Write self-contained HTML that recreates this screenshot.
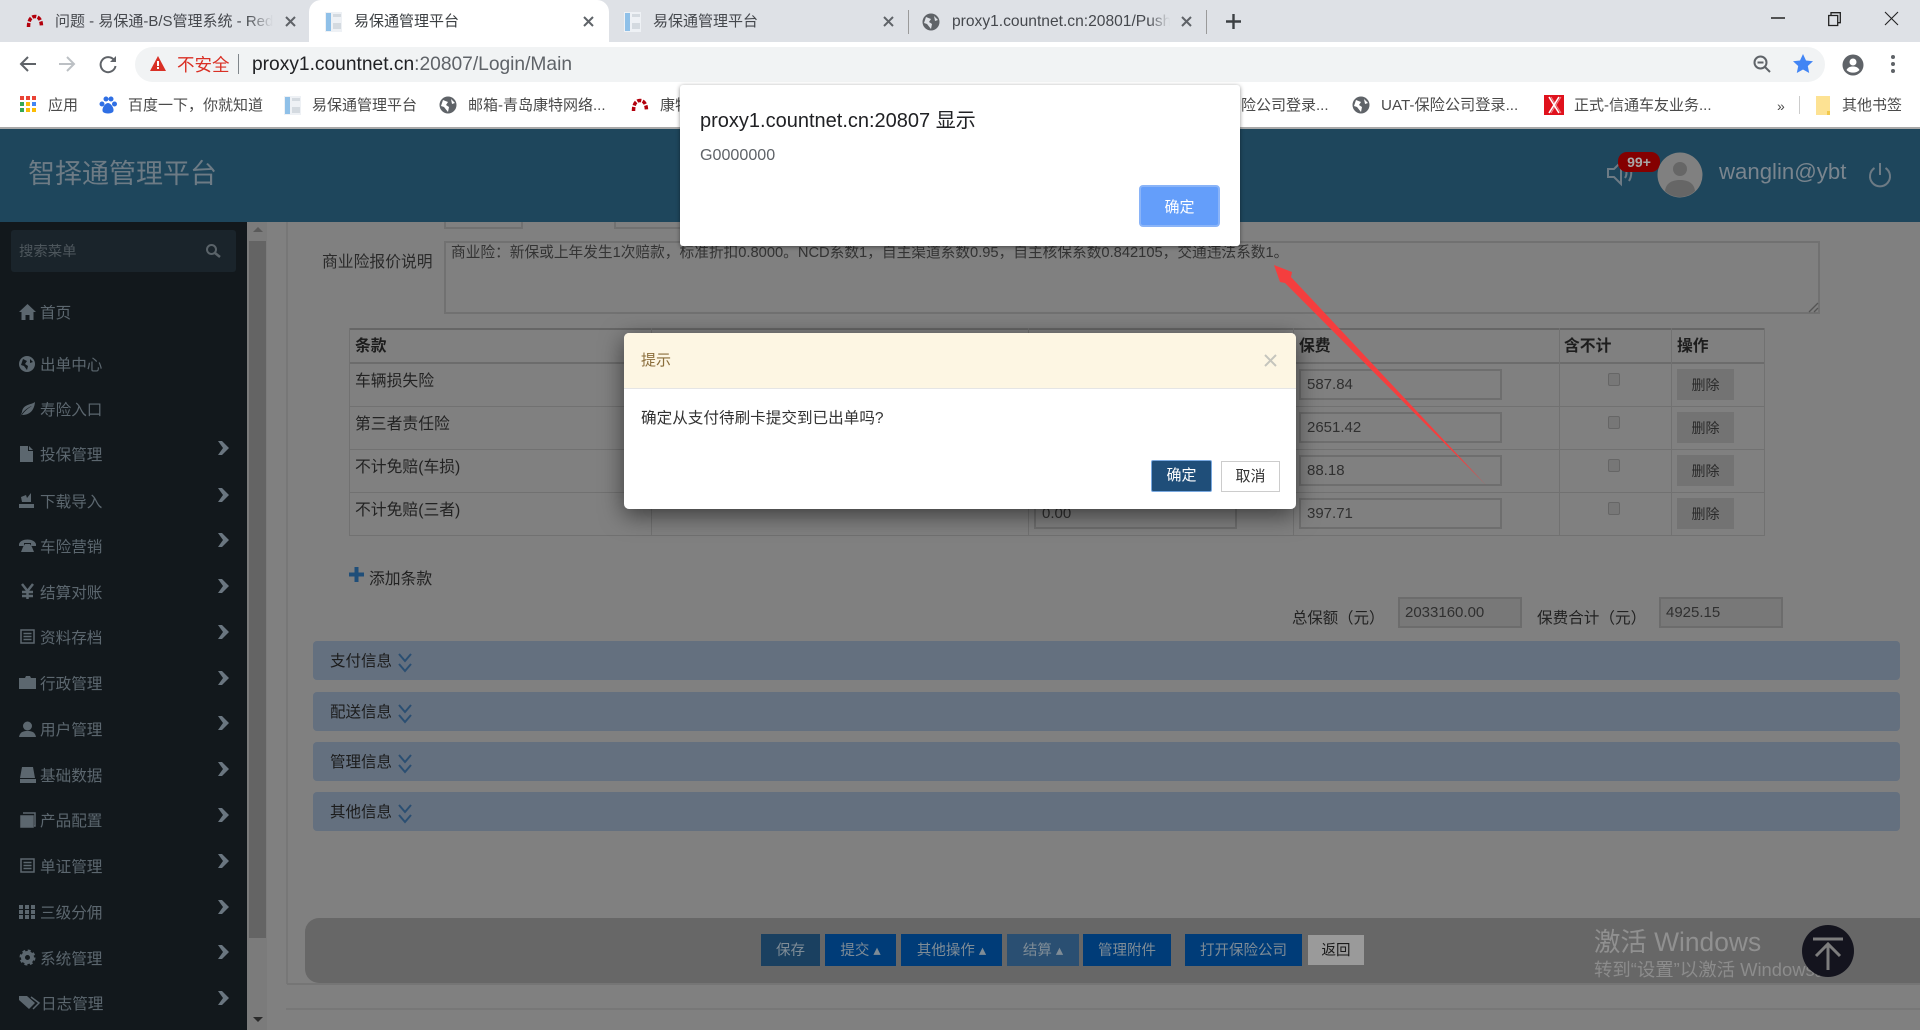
<!DOCTYPE html>
<html lang="zh-CN"><head><meta charset="utf-8"><title>智择通管理平台</title>
<style>
*{box-sizing:border-box}
html,body{margin:0;padding:0;width:1920px;height:1030px;overflow:hidden;background:#808080}
body{position:relative;font-family:"Liberation Sans","Noto Sans CJK SC",sans-serif;font-size:15px;color:#222}
.a{position:absolute}
.t{position:absolute;white-space:nowrap;line-height:20px;height:20px;margin-top:1px}
svg{position:absolute;overflow:visible}
.i{position:absolute;border:2px solid #6e6e6e;height:31px;width:203px;padding:0 0 0 6px;line-height:28px;font-size:15px;color:#303030;background:#808080}
.l{position:absolute;background:#717171}
.m{color:#5c676f;font-size:15.6px}
.ch{position:absolute;left:218px;width:11px;height:14px}
.del{position:absolute;left:1677px;width:57px;height:31px;background:#737373;color:#2a2a2a;font-size:14px;line-height:33px;text-align:center}
.cb{position:absolute;left:1608px;width:12px;height:13px;border:1px solid #666;border-radius:2px;background:#777}
.bar{position:absolute;left:313px;width:1587px;height:39px;background:#64707f;border-radius:4px;color:#1c1c1c;font-size:15.5px;line-height:41px;padding-left:17px}
.fb{position:absolute;top:934px;height:32px;background:#003c78;color:#7f8c96;font-size:14.5px;line-height:34px;text-align:center}
</style></head><body>

<!-- page content -->
<div class="a" style="left:0;top:222px;width:247px;height:808px;background:#12181c"></div>
<div class="a" style="left:247px;top:222px;width:20px;height:808px;background:#7b7b7b"></div>
<div class="a" style="left:249px;top:241px;width:17px;height:697px;background:#646464"></div>
<svg style="left:252px;top:226px" width="12" height="8"><path d="M6 1 1 6h10z" fill="#5a5a5a"/></svg>
<svg style="left:252px;top:1016px" width="12" height="8"><path d="M1 1h10L6 6z" fill="#2a2a2a"/></svg>
<div class="l" style="left:286px;top:222px;width:2px;height:762px;background:#777"></div>
<div class="l" style="left:287px;top:983px;width:1633px;height:2px;background:#757575"></div>
<div class="l" style="left:286px;top:1008px;width:1634px;height:2px;background:#777"></div>

<!-- partial top row -->
<div class="t" style="left:403px;top:203px;color:#222">座数</div>
<div class="t" style="left:550px;top:203px;color:#222">初登日期</div>
<div class="a" style="left:444px;top:215px;width:79px;height:14px;border:2px solid #717171"></div>
<div class="a" style="left:614px;top:215px;width:80px;height:14px;border:2px solid #717171"></div>

<div class="t" style="left:322px;top:252px;color:#2a2a2a;font-size:15.8px">商业险报价说明</div>
<div class="a" style="left:444px;top:241px;width:1376px;height:73px;border:2px solid #717171"></div>
<div class="t" style="left:451px;top:242px;color:#333;font-size:14.7px">商业险：新保或上年发生1次赔款，标准折扣0.8000。NCD系数1，自主渠道系数0.95，自主核保系数0.842105，交通违法系数1。</div>
<svg style="left:1806px;top:300px" width="14" height="14"><path d="M3 12 12 3M8 12l4-4" stroke="#555" stroke-width="1.3"/></svg>

<!-- table -->
<div class="l" style="left:349px;top:328px;width:1415px;height:2px;background:#666"></div>
<div class="l" style="left:349px;top:362px;width:1415px;height:2px;background:#6c6c6c"></div>
<div class="l" style="left:349px;top:406px;width:1415px;height:1px"></div>
<div class="l" style="left:349px;top:449px;width:1415px;height:1px"></div>
<div class="l" style="left:349px;top:492px;width:1415px;height:1px"></div>
<div class="l" style="left:349px;top:535px;width:1415px;height:1px"></div>
<div class="l" style="left:349px;top:328px;width:1px;height:208px"></div>
<div class="l" style="left:651px;top:328px;width:1px;height:208px"></div>
<div class="l" style="left:1028px;top:328px;width:1px;height:208px"></div>
<div class="l" style="left:1293px;top:328px;width:1px;height:208px"></div>
<div class="l" style="left:1559px;top:328px;width:1px;height:208px"></div>
<div class="l" style="left:1671px;top:328px;width:1px;height:208px"></div>
<div class="l" style="left:1764px;top:328px;width:1px;height:208px"></div>

<div class="t" style="left:355px;top:336px;font-weight:700;font-size:15.8px;color:#1d1d1d">条款</div>
<div class="t" style="left:1299px;top:336px;font-weight:700;font-size:15.8px;color:#1d1d1d">保费</div>
<div class="t" style="left:1564px;top:336px;font-weight:700;font-size:15.8px;color:#1d1d1d">含不计</div>
<div class="t" style="left:1677px;top:336px;font-weight:700;font-size:15.8px;color:#1d1d1d">操作</div>
<div class="t" style="left:355px;top:371px;font-size:15.8px">车辆损失险</div>
<div class="t" style="left:355px;top:414px;font-size:15.8px">第三者责任险</div>
<div class="t" style="left:355px;top:457px;font-size:15.8px">不计免赔(车损)</div>
<div class="t" style="left:355px;top:500px;font-size:15.8px">不计免赔(三者)</div>
<div class="i" style="left:1034px;top:498px">0.00</div>
<div class="i" style="left:1299px;top:369px">587.84</div>
<div class="i" style="left:1299px;top:412px">2651.42</div>
<div class="i" style="left:1299px;top:455px">88.18</div>
<div class="i" style="left:1299px;top:498px">397.71</div>
<div class="cb" style="top:373px"></div><div class="cb" style="top:416px"></div><div class="cb" style="top:459px"></div><div class="cb" style="top:502px"></div>
<div class="del" style="top:369px">删除</div><div class="del" style="top:412px">删除</div><div class="del" style="top:455px">删除</div><div class="del" style="top:498px">删除</div>

<svg style="left:349px;top:567px" width="15" height="15"><path d="M5.500 0h4v5.500H15v4H9.500V15h-4V9.500H0v-4h5.500z" fill="#1f4e79"/></svg>
<div class="t" style="left:369px;top:569px;font-size:15.8px">添加条款</div>

<div class="t" style="left:1292px;top:608px;font-size:15.4px">总保额（元）</div>
<div class="i" style="left:1398px;top:597px;width:124px;background:#787878;border-color:#6c6c6c;padding-left:5px">2033160.00</div>
<div class="t" style="left:1537px;top:608px;font-size:15.6px">保费合计（元）</div>
<div class="i" style="left:1659px;top:597px;width:124px;background:#787878;border-color:#6c6c6c;padding-left:5px">4925.15</div>

<div class="bar" style="top:641px">支付信息<svg style="left:85px;top:12px" width="14" height="20"><path d="M1 1l6 7 6-7M1 11l6 7 6-7" fill="none" stroke="#2b4f72" stroke-width="2"/></svg></div>
<div class="bar" style="top:692px">配送信息<svg style="left:85px;top:12px" width="14" height="20"><path d="M1 1l6 7 6-7M1 11l6 7 6-7" fill="none" stroke="#2b4f72" stroke-width="2"/></svg></div>
<div class="bar" style="top:742px">管理信息<svg style="left:85px;top:12px" width="14" height="20"><path d="M1 1l6 7 6-7M1 11l6 7 6-7" fill="none" stroke="#2b4f72" stroke-width="2"/></svg></div>
<div class="bar" style="top:792px">其他信息<svg style="left:85px;top:12px" width="14" height="20"><path d="M1 1l6 7 6-7M1 11l6 7 6-7" fill="none" stroke="#2b4f72" stroke-width="2"/></svg></div>

<!-- footer bar -->
<div class="a" style="left:305px;top:918px;width:1615px;height:65px;background:#676767;border-radius:14px 0 0 14px"></div>
<div class="fb" style="left:761px;width:59px;background:#1a4060">保存</div>
<div class="fb" style="left:825px;width:71px">提交 ▴</div>
<div class="fb" style="left:901px;width:101px">其他操作 ▴</div>
<div class="fb" style="left:1007px;width:72px;background:#2a4f72">结算 ▴</div>
<div class="fb" style="left:1083px;width:88px">管理附件</div>
<div class="fb" style="left:1185px;width:117px">打开保险公司</div>
<div class="fb" style="left:1308px;width:56px;top:935px;height:30px;line-height:32px;background:#9a9a9a;color:#1a1a1a">返回</div>
<div class="t" style="left:1594px;top:926px;height:30px;line-height:30px;font-size:26.4px;color:#909090">激活 Windows</div>
<div class="t" style="left:1594px;top:959px;font-size:18.4px;color:#8c8c8c">转到“设置”以激活 Windows。</div>
<div class="a" style="left:1802px;top:925px;width:52px;height:52px;border-radius:50%;background:#14141e"></div>
<svg style="left:1802px;top:925px" width="52" height="52"><path d="M11 14h30M26 45V19M14 31l12-12 12 12" fill="none" stroke="#7d7d7d" stroke-width="3"/></svg>

<!-- sidebar -->
<div class="a" style="left:11px;top:230px;width:225px;height:42px;background:#1a242b;border-radius:3px"></div>
<div class="t" style="left:19px;top:241px;color:#4d565c;font-size:14.4px">搜索菜单</div>
<svg style="left:205px;top:243px" width="16" height="16"><circle cx="6.500" cy="6.500" r="4.500" fill="none" stroke="#5a6369" stroke-width="2"/><path d="M10 10l5 4" stroke="#5a6369" stroke-width="2.500"/></svg>

<div class="t m" style="left:40px;top:303px">首页</div>
<div class="t m" style="left:40px;top:355px">出单中心</div>
<div class="t m" style="left:40px;top:400px">寿险入口</div>
<div class="t m" style="left:40px;top:445px">投保管理</div>
<div class="t m" style="left:40px;top:492px">下载导入</div>
<div class="t m" style="left:40px;top:537px">车险营销</div>
<div class="t m" style="left:40px;top:583px">结算对账</div>
<div class="t m" style="left:40px;top:628px">资料存档</div>
<div class="t m" style="left:40px;top:674px">行政管理</div>
<div class="t m" style="left:40px;top:720px">用户管理</div>
<div class="t m" style="left:40px;top:766px">基础数据</div>
<div class="t m" style="left:40px;top:811px">产品配置</div>
<div class="t m" style="left:40px;top:857px">单证管理</div>
<div class="t m" style="left:40px;top:903px">三级分佣</div>
<div class="t m" style="left:40px;top:949px">系统管理</div>
<div class="t m" style="left:41px;top:994px">日志管理</div>

<svg style="left:19px;top:304px" width="17" height="16" fill="#5c676f"><path d="M8.500 0 0 8h2.500v8h4v-5h4v5h4V8H17z"/></svg>
<svg style="left:19px;top:356px" width="16" height="16"><circle cx="8" cy="8" r="8" fill="#5c676f"/><path d="M4 3l4 2-2 3 3 2-1 4-3-4-3-1zM11 3l3 3-3 1z" fill="#12181c"/></svg>
<svg style="left:19px;top:401px" width="17" height="16"><path d="M1 16C3 11 9 6 13 5 9 7 5 11 3 14 8 14 15 12 16 1 12 4 4 3 3 11" fill="#5c676f"/></svg>
<svg style="left:20px;top:446px" width="14" height="16" fill="#5c676f"><path d="M0 0h8v5h5v11H0zM9 0l4 4H9z"/></svg>
<svg style="left:19px;top:493px" width="16" height="15" fill="#5c676f"><path d="M0 11h15v4H0zM2 4l5-2 1 3 4-5v9H3z"/></svg>
<svg style="left:19px;top:538px" width="17" height="15" fill="#5c676f"><path d="M0 6C2 0 15 0 17 6v2h-5V5H5v3H0zM4 9l2-3h5l2 3 2 5H2z"/></svg>
<svg style="left:21px;top:584px" width="13" height="15" fill="none" stroke="#5c676f" stroke-width="2.500"><path d="M1 0l5.500 7L12 0M6.500 7v8M1 8h11M1 12h11"/></svg>
<svg style="left:20px;top:629px" width="15" height="15" fill="none" stroke="#5c676f" stroke-width="1.500"><path d="M1 1h13v13H1zM3.500 4.500h8M3.500 7.500h8M3.500 10.500h8"/></svg>
<svg style="left:19px;top:676px" width="17" height="13" fill="#5c676f"><path d="M0 2h6l1-2h4l1 2h5v11H0z"/></svg>
<svg style="left:19px;top:721px" width="17" height="16" fill="#5c676f"><circle cx="8.500" cy="5" r="4.500"/><path d="M0 16c1-5 4-6 8.500-6S16 11 17 16z"/></svg>
<svg style="left:19px;top:767px" width="17" height="16" fill="#5c676f"><path d="M3 0h11l2 11H1zM1 12h16v4H1z"/></svg>
<svg style="left:20px;top:812px" width="16" height="16" fill="none" stroke="#5c676f" stroke-width="1.500"><path d="M3 1h12v13h-1"/><path d="M1 4h12v11H1z" fill="#5c676f"/></svg>
<svg style="left:20px;top:858px" width="15" height="15" fill="none" stroke="#5c676f" stroke-width="1.500"><path d="M1 1h13v13H1zM3.500 4.500h8M3.500 7.500h8M3.500 10.500h8"/></svg>
<svg style="left:19px;top:905px" width="16" height="14" fill="#5c676f"><path d="M0 0h4v4H0zM6 0h4v4H6zM12 0h4v4h-4zM0 5h4v4H0zM6 5h4v4H6zM12 5h4v4h-4zM0 10h4v4H0zM6 10h4v4H6zM12 10h4v4h-4z"/></svg>
<svg style="left:20px;top:950px" width="15" height="15"><circle cx="7.500" cy="7.500" r="4.500" fill="none" stroke="#5c676f" stroke-width="4"/><circle cx="7.500" cy="7.500" r="7" fill="none" stroke="#5c676f" stroke-width="2" stroke-dasharray="3 2.500"/></svg>
<svg style="left:19px;top:995px" width="21" height="15" fill="#5c676f"><path d="M0 1h8l8 7-6 6-10-9z"/><path d="M12 2l8 6-6 6" fill="none" stroke="#5c676f" stroke-width="1.500"/></svg>

<svg class="ch" style="top:441px" viewBox="0 0 11 14"><path d="M0 0h4l7 7-7 7H0l5-7z" fill="#6a7680"/></svg>
<svg class="ch" style="top:488px" viewBox="0 0 11 14"><path d="M0 0h4l7 7-7 7H0l5-7z" fill="#6a7680"/></svg>
<svg class="ch" style="top:533px" viewBox="0 0 11 14"><path d="M0 0h4l7 7-7 7H0l5-7z" fill="#6a7680"/></svg>
<svg class="ch" style="top:579px" viewBox="0 0 11 14"><path d="M0 0h4l7 7-7 7H0l5-7z" fill="#6a7680"/></svg>
<svg class="ch" style="top:625px" viewBox="0 0 11 14"><path d="M0 0h4l7 7-7 7H0l5-7z" fill="#6a7680"/></svg>
<svg class="ch" style="top:671px" viewBox="0 0 11 14"><path d="M0 0h4l7 7-7 7H0l5-7z" fill="#6a7680"/></svg>
<svg class="ch" style="top:716px" viewBox="0 0 11 14"><path d="M0 0h4l7 7-7 7H0l5-7z" fill="#6a7680"/></svg>
<svg class="ch" style="top:762px" viewBox="0 0 11 14"><path d="M0 0h4l7 7-7 7H0l5-7z" fill="#6a7680"/></svg>
<svg class="ch" style="top:808px" viewBox="0 0 11 14"><path d="M0 0h4l7 7-7 7H0l5-7z" fill="#6a7680"/></svg>
<svg class="ch" style="top:854px" viewBox="0 0 11 14"><path d="M0 0h4l7 7-7 7H0l5-7z" fill="#6a7680"/></svg>
<svg class="ch" style="top:900px" viewBox="0 0 11 14"><path d="M0 0h4l7 7-7 7H0l5-7z" fill="#6a7680"/></svg>
<svg class="ch" style="top:945px" viewBox="0 0 11 14"><path d="M0 0h4l7 7-7 7H0l5-7z" fill="#6a7680"/></svg>
<svg class="ch" style="top:991px" viewBox="0 0 11 14"><path d="M0 0h4l7 7-7 7H0l5-7z" fill="#6a7680"/></svg>

<!-- app header -->
<div class="a" style="left:0;top:128px;width:1920px;height:94px;background:#1e465c"></div>
<div class="t" style="left:28px;top:153px;height:40px;line-height:40px;font-size:27px;color:#6d7b85">智择通管理平台</div>
<svg style="left:1607px;top:160px" width="28" height="26" fill="none" stroke="#6d7b85" stroke-width="2"><path d="M1 9h6l7-7v22l-7-7H1zM18 8c2 3 2 7 0 10M22 5c3 5 3 11 0 16"/></svg>
<div class="a" style="left:1618px;top:152px;width:42px;height:20px;border-radius:9px;background:#850000;color:#a8a8a8;font-weight:700;font-size:14px;line-height:20px;text-align:center">99+</div>
<svg style="left:1657px;top:152px" width="46" height="46"><circle cx="23" cy="23" r="22.500" fill="#808080"/><circle cx="23" cy="17" r="7" fill="#666"/><path d="M8 39c1-8 7-11 15-11s14 3 15 11c-8 8-22 8-30 0z" fill="#666"/></svg>
<div class="t" style="left:1719px;top:156px;height:30px;line-height:30px;font-size:22.2px;color:#7a858e">wanglin@ybt</div>
<svg style="left:1868px;top:162px" width="24" height="26" fill="none" stroke="#6d7b85" stroke-width="2"><path d="M12 1v12M6.500 6a10 10 0 1 0 11 0"/></svg>

<!-- browser chrome -->
<div class="a" style="left:0;top:0;width:1920px;height:42px;background:#dee1e6"></div>
<div class="a" style="left:0;top:42px;width:1920px;height:85px;background:#fff"></div>
<div class="a" style="left:0;top:127px;width:1920px;height:2px;background:#a8a8a8"></div>
<!-- active tab -->
<div class="a" style="left:309px;top:0;width:300px;height:42px;background:#fff;border-radius:12px 12px 0 0"></div>
<div class="a" style="left:908px;top:10px;width:1px;height:24px;background:#9a9a9a"></div>
<div class="a" style="left:1206px;top:10px;width:1px;height:24px;background:#9a9a9a"></div>

<svg style="left:25px;top:13px" width="20" height="16"><path d="M3.500 14C3.500 7 6 3.500 10 3.500s6.500 3.500 6.500 10.500" fill="none" stroke="#b3000c" stroke-width="3.500" stroke-dasharray="4 1.500"/></svg>
<div class="t" style="left:55px;top:11px;width:218px;overflow:hidden;color:#45484d;font-size:15px;-webkit-mask-image:linear-gradient(90deg,#000 88%,transparent)">问题 - 易保通-B/S管理系统 - Redmine</div>
<div class="t" style="left:354px;top:11px;color:#3c4043;font-size:15px">易保通管理平台</div>
<div class="t" style="left:653px;top:11px;color:#45484d;font-size:15px">易保通管理平台</div>
<div class="t" style="left:952px;top:11px;width:218px;overflow:hidden;color:#45484d;font-size:15.6px;-webkit-mask-image:linear-gradient(90deg,#000 90%,transparent)">proxy1.countnet.cn:20801/PushMessage</div>
<svg style="left:325px;top:11px" width="18" height="21"><path d="M0 1h17v20H0z" fill="#eef1f5"/><path d="M1 2h5v18H1z" fill="#8fc0e8"/><path d="M8 3h8v3H8zM8 12h8v6H8z" fill="#d4dae0"/></svg>
<svg style="left:624px;top:11px" width="18" height="21"><path d="M0 1h17v20H0z" fill="#eef1f5"/><path d="M1 2h5v18H1z" fill="#8fc0e8"/><path d="M8 3h8v3H8zM8 12h8v6H8z" fill="#d4dae0"/></svg>
<svg style="left:922px;top:13px" width="18" height="18"><circle cx="9" cy="9" r="8.500" fill="#5f6368"/><path d="M4 4l5 2-2 3 3 2-1 5-4-5-3-1zM12 3l4 4-3 1z" fill="#dee1e6"/></svg>
<svg style="left:285px;top:16px" width="11" height="11" stroke="#5f6368" stroke-width="2"><path d="M1 1l9 9M10 1l-9 9"/></svg>
<svg style="left:583px;top:16px" width="11" height="11" stroke="#5f6368" stroke-width="2"><path d="M1 1l9 9M10 1l-9 9"/></svg>
<svg style="left:883px;top:16px" width="11" height="11" stroke="#5f6368" stroke-width="2"><path d="M1 1l9 9M10 1l-9 9"/></svg>
<svg style="left:1181px;top:16px" width="11" height="11" stroke="#5f6368" stroke-width="2"><path d="M1 1l9 9M10 1l-9 9"/></svg>
<svg style="left:1226px;top:14px" width="15" height="15" stroke="#3c4043" stroke-width="2.400"><path d="M7.500 0v15M0 7.500h15"/></svg>
<svg style="left:1771px;top:17px" width="14" height="2"><path d="M0 1h14" stroke="#222" stroke-width="1.500"/></svg>
<svg style="left:1828px;top:12px" width="13" height="14" fill="none" stroke="#222" stroke-width="1.300"><path d="M.700 3.500h9v10h-9zM3 3.500V.700h9.300v10H10"/></svg>
<svg style="left:1885px;top:12px" width="13" height="13" stroke="#222" stroke-width="1.100"><path d="M0 0l13 13M13 0 0 13"/></svg>

<!-- toolbar -->
<svg style="left:19px;top:56px" width="17" height="16" fill="none" stroke="#5f6368" stroke-width="2"><path d="M17 8H2M9 1 2 8l7 7"/></svg>
<svg style="left:59px;top:56px" width="17" height="16" fill="none" stroke="#bcc0c4" stroke-width="2"><path d="M0 8h15M8 1l7 7-7 7"/></svg>
<svg style="left:99px;top:55px" width="18" height="18" fill="none" stroke="#5f6368" stroke-width="2"><path d="M15 5a7.500 7.500 0 1 0 1.500 6"/><path d="M17 1v6h-6" fill="#5f6368" stroke="none"/></svg>
<div class="a" style="left:135px;top:47px;width:1690px;height:35px;background:#f1f3f4;border-radius:18px"></div>
<svg style="left:150px;top:56px" width="16" height="15"><path d="M8 0l8 15H0z" fill="#d93025"/><path d="M7 5h2v5H7zM7 11h2v2H7z" fill="#fff"/></svg>
<div class="t" style="left:177px;top:54px;color:#d93025;font-size:17.500px">不安全</div>
<div class="a" style="left:238px;top:54px;width:1px;height:20px;background:#80868b"></div>
<div class="t" style="left:252px;top:53px;height:22px;line-height:22px;font-size:19.2px;color:#5f6368"><span style="color:#202124">proxy1.countnet.cn</span>:20807/Login/Main</div>
<svg style="left:1753px;top:55px" width="18" height="18" fill="none" stroke="#5f6368" stroke-width="2"><circle cx="7.500" cy="7.500" r="6"/><path d="M12 12l5 5M4.500 7.500h6"/></svg>
<svg style="left:1793px;top:54px" width="20" height="19"><path d="M10 0l3 6.500 7 .8-5.200 4.700 1.400 7L10 15.500 3.800 19l1.400-7L0 7.300l7-.8z" fill="#4285f4"/></svg>
<svg style="left:1842px;top:54px" width="22" height="22"><circle cx="11" cy="11" r="10.500" fill="#5f6368"/><circle cx="11" cy="8" r="3.500" fill="#fff"/><path d="M4.500 16c1.500-3 4-3.500 6.500-3.500s5 .5 6.500 3.500c-3 3.500-10 3.500-13 0z" fill="#fff"/></svg>
<svg style="left:1891px;top:55px" width="4" height="18" fill="#5f6368"><circle cx="2" cy="2" r="2"/><circle cx="2" cy="9" r="2"/><circle cx="2" cy="16" r="2"/></svg>

<!-- bookmarks -->
<svg style="left:20px;top:96px" width="17" height="17"><path d="M0 0h4v4H0z" fill="#ea4335"/><path d="M6 0h4v4H6z" fill="#ea4335"/><path d="M12 0h4v4h-4z" fill="#ea4335"/><path d="M0 6h4v4H0z" fill="#34a853"/><path d="M6 6h4v4H6z" fill="#fbbc05"/><path d="M12 6h4v4h-4z" fill="#4285f4"/><path d="M0 12h4v4H0z" fill="#34a853"/><path d="M6 12h4v4H6z" fill="#fbbc05"/><path d="M12 12h4v4h-4z" fill="#fbbc05"/></svg>
<div class="t" style="left:48px;top:95px;color:#4a4a4a;font-size:15px">应用</div>
<svg style="left:99px;top:96px" width="18" height="18" fill="#2f6fe4"><circle cx="3" cy="8" r="2.500"/><circle cx="7" cy="3" r="2.500"/><circle cx="12" cy="3" r="2.500"/><circle cx="15.500" cy="8" r="2.500"/><path d="M9 7c3 0 7 6 5 9-2 2-8 2-10 0-2-3 2-9 5-9z"/></svg>
<div class="t" style="left:128px;top:95px;color:#4a4a4a;font-size:15px">百度一下，你就知道</div>
<svg style="left:284px;top:96px" width="18" height="19"><path d="M0 0h17v19H0z" fill="#eef1f5"/><path d="M1 1h5v17H1z" fill="#8fc0e8"/><path d="M8 2h8v3H8zM8 11h8v6H8z" fill="#d4dae0"/></svg>
<div class="t" style="left:312px;top:95px;color:#4a4a4a;font-size:15px">易保通管理平台</div>
<svg style="left:439px;top:96px" width="18" height="18"><circle cx="9" cy="9" r="8.500" fill="#5f6368"/><path d="M4 4l5 2-2 3 3 2-1 5-4-5-3-1zM12 3l4 4-3 1z" fill="#fff"/></svg>
<div class="t" style="left:468px;top:95px;color:#4a4a4a;font-size:15px">邮箱-青岛康特网络...</div>
<svg style="left:630px;top:97px" width="20" height="16"><path d="M3.500 14C3.500 7 6 3.500 10 3.500s6.500 3.500 6.500 10.500" fill="none" stroke="#b3000c" stroke-width="3.500" stroke-dasharray="4 1.500"/></svg>
<div class="t" style="left:660px;top:95px;width:25px;overflow:hidden;color:#4a4a4a;font-size:15px">康特</div>
<div class="t" style="left:1241px;top:95px;color:#4a4a4a;font-size:15px">险公司登录...</div>
<svg style="left:1352px;top:96px" width="18" height="18"><circle cx="9" cy="9" r="8.500" fill="#5f6368"/><path d="M4 4l5 2-2 3 3 2-1 5-4-5-3-1zM12 3l4 4-3 1z" fill="#fff"/></svg>
<div class="t" style="left:1381px;top:95px;color:#4a4a4a;font-size:15.2px">UAT-保险公司登录...</div>
<svg style="left:1544px;top:95px" width="20" height="20"><path d="M0 0h20v20H0z" fill="#e0111c"/><path d="M5 2l10 16M15 2 5 18" stroke="#fff" stroke-width="1.600"/><path d="M5 2l10 16M15 2 5 18" stroke="#fff" stroke-width="1" transform="translate(2 0)" opacity=".5"/></svg>
<div class="t" style="left:1574px;top:95px;color:#4a4a4a;font-size:15px">正式-信通车友业务...</div>
<div class="t" style="left:1777px;top:95px;color:#4a4a4a;font-size:14px">»</div>
<div class="a" style="left:1799px;top:96px;width:1px;height:18px;background:#ccc"></div>
<svg style="left:1815px;top:96px" width="16" height="19"><path d="M1 0h14v19H1z" fill="#fde293"/><path d="M12 15h3v4h-3z" fill="#f2c94c"/></svg>
<div class="t" style="left:1842px;top:95px;color:#4a4a4a;font-size:15px">其他书签</div>

<!-- alert -->
<div class="a" style="left:680px;top:85px;width:560px;height:161px;background:#fff;border-radius:3px;box-shadow:0 1px 4px rgba(0,0,0,.45)"></div>
<div class="t" style="left:700px;top:108px;height:24px;line-height:24px;font-size:20px;color:#202124">proxy1.countnet.cn:20807 显示</div>
<div class="t" style="left:700px;top:144px;font-size:16.1px;color:#5f6368">G0000000</div>
<div class="a" style="left:1139px;top:185px;width:81px;height:42px;background:#649efa;border:2px solid #8ab4f8;border-radius:4px;color:#fff;font-size:15px;line-height:42px;text-align:center">确定</div>

<!-- modal -->
<div class="a" style="left:624px;top:333px;width:672px;height:176px;background:#fff;border-radius:5px;box-shadow:0 6px 24px rgba(0,0,0,.55)"></div>
<div class="a" style="left:624px;top:333px;width:672px;height:56px;background:#fdf6e3;border-bottom:1px solid #e5e5e5;border-radius:5px 5px 0 0"></div>
<div class="t" style="left:641px;top:350px;font-size:15px;color:#8a6d3b">提示</div>
<svg style="left:1265px;top:355px" width="11" height="11" stroke="#c5c5bd" stroke-width="2"><path d="M0 0l11 11M11 0 0 11"/></svg>
<div class="t" style="left:641px;top:408px;font-size:15.6px;color:#333">确定从支付待刷卡提交到已出单吗?</div>
<div class="a" style="left:1151px;top:460px;width:61px;height:32px;background:#1f4e79;border:1px solid #78a8e0;border-radius:2px;color:#fff;font-size:15px;line-height:30px;text-align:center">确定</div>
<div class="a" style="left:1221px;top:461px;width:59px;height:31px;background:#fff;border:1px solid #ccc;color:#333;font-size:15px;line-height:29px;text-align:center">取消</div>

<!-- red arrow -->
<svg style="left:0;top:0" width="1920" height="1030"><path d="M1274 265 1292 272 1291 277 1486 485 1285 283 1280 282z" fill="#f43e3e"/></svg>
</body></html>
